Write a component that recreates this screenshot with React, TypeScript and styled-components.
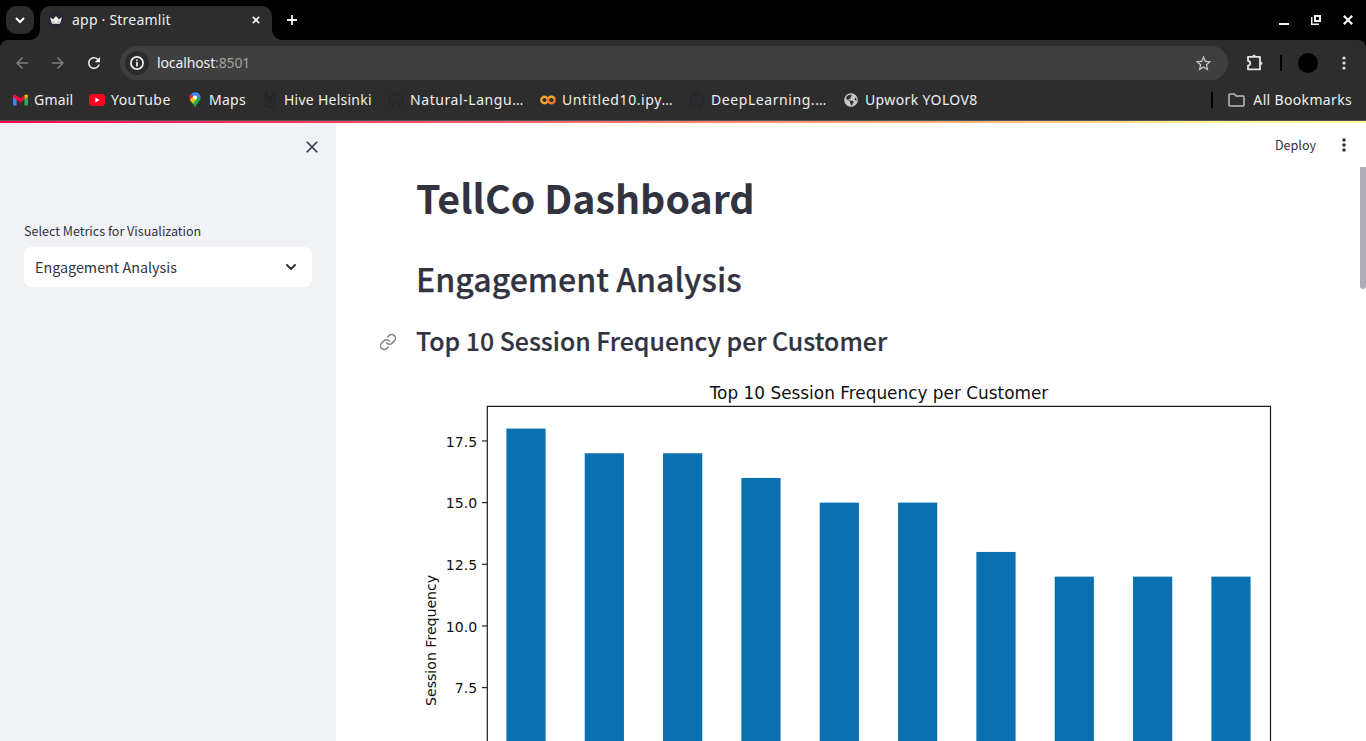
import React from "react";
import styled, { createGlobalStyle } from "styled-components";
import { FiLink } from "react-icons/fi";
import { FaGithub, FaGlobeAmericas } from "react-icons/fa";
import { MdStarBorder, MdArrowBack, MdArrowForward, MdRefresh } from "react-icons/md";

const Global = createGlobalStyle`
  html, body { margin: 0; height: 100%; overflow: hidden; }
  * { box-sizing: border-box; }
  #root { height: 100%; }
  svg { display: block; flex: none; }
`;

const sourceSans = '"Noto Sans CJK JP", "Noto Sans", sans-serif';
const uiSans = '"Noto Sans", "Open Sans", sans-serif';

const Window = styled.div`
  width: 1366px;
  height: 741px;
  display: flex;
  flex-direction: column;
  overflow: hidden;
  background: #000;
  font-family: ${uiSans};
`;

const TabStrip = styled.header`
  height: 40px;
  flex: none;
  display: flex;
  align-items: center;
  padding-right: 13px;
`;

const TabSearch = styled.button`
  width: 28px;
  height: 28px;
  margin: 0 6px;
  padding: 0;
  border: 0;
  border-radius: 10px;
  background: #2d2d2d;
  display: grid;
  place-items: center;
`;

const Tab = styled.div`
  position: relative;
  align-self: flex-end;
  width: 232px;
  height: 34px;
  border-radius: 10px 10px 0 0;
  background: #2d2d2d;
  display: flex;
  align-items: center;
  padding: 0 12px 6px 8px;
  &::before, &::after {
    content: "";
    position: absolute;
    bottom: 0;
    width: 10px;
    height: 10px;
  }
  &::before { left: -10px; background: radial-gradient(circle at 0 0, transparent 9.5px, #2d2d2d 10px); }
  &::after { right: -10px; background: radial-gradient(circle at 100% 0, transparent 9.5px, #2d2d2d 10px); }
`;

const Label = styled.span<{ $track?: number }>`
  font-size: 14px;
  letter-spacing: ${p => p.$track ?? 0}px;
  line-height: 20px;
  white-space: nowrap;
  color: #f0f0f0;
`;

const TabTitle = styled(Label)`
  margin-left: 8px;
  flex: 1;
`;

const NewTab = styled.div`
  margin-left: 14px;
  flex: 1;
`;

const WindowButtons = styled.div`
  display: flex;
  align-items: center;
  gap: 22px;
`;

const BrowserChrome = styled.div`
  height: 81px;
  flex: none;
  background: #2d2d2d;
  border-radius: 8px 8px 0 0;
  border-bottom: 1px solid #555;
`;

const Toolbar = styled.div`
  height: 40px;
  display: flex;
  align-items: flex-end;
  padding: 0 14px 0 13px;
`;

const NavButton = styled.div<{ $dim?: boolean }>`
  width: 36px;
  height: 34px;
  display: flex;
  align-items: center;
  color: ${p => (p.$dim ? "#7d7d7d" : "#ececec")};
`;

const Omnibox = styled.div`
  width: 1108px;
  height: 34px;
  margin-left: -1px;
  border-radius: 17px;
  background: #3f3f3f;
  display: flex;
  align-items: center;
  padding: 0 15px 0 5px;
`;

const SiteInfo = styled.div`
  width: 24px;
  height: 24px;
  border-radius: 50%;
  background: #2b2b2b;
  display: grid;
  place-items: center;
  margin-right: 8px;
`;

const Url = styled(Label)`
  flex: 1;
  b { font-weight: 400; color: #a5a19b; }
`;

const ToolbarEnd = styled.div`
  height: 34px;
  flex: 1;
  display: flex;
  align-items: center;
  padding-left: 18px;
`;

const Divider = styled.i`
  width: 2px;
  height: 16px;
  background: #000;
`;

const Avatar = styled.div`
  width: 20px;
  height: 20px;
  border-radius: 50%;
  background: #000;
  margin: 0 24px 0 16px;
`;

const ExtensionIcon = styled.svg`
  margin-right: 17px;
`;

const Bookmarks = styled.nav`
  height: 40px;
  display: flex;
  align-items: center;
  padding: 0 14px 0 12px;
`;

const Bookmark = styled.div<{ $width: number }>`
  width: ${p => p.$width}px;
  display: flex;
  align-items: center;
  gap: 6px;
`;

const IconSlot = styled.span`
  width: 16px;
  display: grid;
  place-items: center;
`;

const AllBookmarks = styled.div`
  margin-left: auto;
  display: flex;
  align-items: center;
  & > svg { margin: 0 8px 0 15px; }
`;

const Decoration = styled.div`
  height: 2px;
  flex: none;
  background: linear-gradient(90deg, #ff0051, #ff4b6a 30%, #ff7d6f 50%, #ffc080 75%, #fbff8f 92%, #fbff9a);
`;

const Page = styled.div`
  flex: 1;
  min-height: 0;
  display: flex;
  background: #fff;
  color: #31333f;
  font-family: ${sourceSans};
`;

const Sidebar = styled.aside`
  width: 336px;
  flex: none;
  background: #f0f2f6;
  padding: 18px 24px 0;
`;

const CloseSidebar = styled.div`
  display: flex;
  justify-content: flex-end;
  height: 80px;
  margin-right: -6px;
`;

const FieldLabel = styled.label`
  display: block;
  font-size: 12.55px;
  line-height: 20px;
  height: 26px;
`;

const Select = styled.div`
  height: 40px;
  border-radius: 8px;
  background: #fff;
  display: flex;
  align-items: center;
  justify-content: space-between;
  padding: 0 15px 0 11px;
  font-size: 14.33px;
  line-height: 20px;
`;

const Main = styled.main`
  flex: 1;
  min-width: 0;
  display: flex;
  flex-direction: column;
`;

const AppHeader = styled.div`
  height: 44px;
  flex: none;
  display: flex;
  align-items: center;
  justify-content: flex-end;
  padding-right: 20px;
  font-size: 12.55px;
  gap: 26px;
`;

const Deploy = styled.span`
  padding-bottom: 2px;
`;

const Body = styled.div`
  flex: 1;
  min-height: 0;
  display: flex;
`;

const Content = styled.div`
  flex: 1;
  padding-left: 43px;
  overflow: hidden;
`;

const Heading = styled.div<{ $size: number; $height: number; $weight: number; $stroke?: number; $top?: number }>`
  height: ${p => p.$height}px;
  margin: ${p => p.$top ?? 0}px 0 0;
  padding-left: 37px;
  font-size: ${p => p.$size}px;
  font-weight: ${p => p.$weight};
  line-height: ${p => p.$height}px;
  -webkit-text-stroke: ${p => p.$stroke ?? 0}px #31333f;
  white-space: nowrap;
`;

const AnchoredRow = styled.div`
  display: flex;
  align-items: center;
  & > svg { margin: 2px -18px 0 0; color: #85868e; }
`;

const Scrollbar = styled.div`
  width: 6px;
  height: 122px;
  background: #adadb3;
  border-radius: 0 0 3px 3px;
`;

const Close = ({ size, color, width }: { size: number; color: string; width: number }) => (
  <svg width={size} height={size} viewBox={`0 0 ${size} ${size}`} stroke={color} strokeWidth={width}>
    <path d={`M.8 .8L${size - 0.8} ${size - 0.8}M${size - 0.8} .8L.8 ${size - 0.8}`} />
  </svg>
);

const Dots = ({ color, r = 1.6, gap = 5 }: { color: string; r?: number; gap?: number }) => (
  <svg width="4" height="16" viewBox="0 0 4 16" fill={color}>
    {[-1, 0, 1].map(i => <circle key={i} cx="2" cy={8 + i * gap} r={r} />)}
  </svg>
);

const StreamlitMark = () => (
  <svg width="16" height="16" viewBox="0 0 16 16">
    <circle cx="8" cy="8" r="8" fill="#262730" />
    <path d="M2 5.3L5.2 7.2L8 4.1L10.8 7.2L14 5.3L12.2 11.2Q8 12.2 3.8 11.2Z" fill="#f2f2f2" />
    <path d="M5.2 7.2L8 11.6L10.8 7.2L12.2 11.2Q8 12.2 3.8 11.2Z" fill="#cfcfd2" />
  </svg>
);

const GmailMark = () => (
  <svg width="15" height="12" viewBox="0 0 15 12">
    <path d="M0 2.5L3.6 5V11.5H1Q0 11.5 0 10.5Z" fill="#4285f4" />
    <path d="M15 2.5L11.4 5V11.5H14Q15 11.5 15 10.5Z" fill="#34a853" />
    <path d="M11.4 1.2L13 .4Q15 .2 15 2.5L11.4 5.2Z" fill="#fbbc04" />
    <path d="M0 2.5Q0 .2 2 .4L7.5 4.2L11.4 1.2V5.7L7.5 8.8L3.6 5.7L0 3Z" fill="#f5083a" />
  </svg>
);

const YouTubeMark = () => (
  <svg width="16" height="12" viewBox="0 0 16 12">
    <rect width="16" height="12" rx="3" fill="#ff0020" />
    <path d="M6.3 3.6L10.6 6L6.3 8.4Z" fill="#fff" />
  </svg>
);

const MapsMark = () => (
  <svg width="12" height="16" viewBox="0 0 12 16">
    <path d="M6 16C5.4 13 3.8 11.6 2.4 10L9.8 1.7Q12 3.4 11.6 6.3C11.2 9.5 7 11.8 6 16Z" fill="#20ad50" />
    <path d="M.4 5.6Q.4 3.6 1.8 2L5 4.6L2.4 7.8L1.2 8.2Z" fill="#f0263c" />
    <path d="M1.8 2Q3.8 -.2 7 .2T11 3.2L7.7 6.9L4.2 4.2Z" fill="#4285f4" />
    <path d="M2.4 10Q1.3 8.8.9 7.8L4.3 4.2L7.7 6.9L3.7 11.5Z" fill="#fbbc04" />
    <circle cx="6" cy="5.6" r="2" fill="#fff" />
  </svg>
);

const HornsMark = () => (
  <svg width="12" height="16" viewBox="0 0 12 16" fill="none" stroke="#232121" strokeWidth="1" strokeLinejoin="round">
    <path d="M1 1.2L2.4 .8L3.2 5.4L5 4.8L6.5 5.2L8 5V2.2L9.8 2L11 10.5Q10.8 14.8 6.8 15T1.8 11ZM5 5.2V8.4M7.2 5.2V8.2M2.6 9.6L8 8.8L8.4 10.4L5 11.8" />
  </svg>
);

const ColabMark = () => (
  <svg width="16" height="10" viewBox="0 0 16 10" fill="none" strokeWidth="2.4">
    <circle cx="4.5" cy="5" r="3.2" stroke="#f9a42c" />
    <circle cx="11.4" cy="5" r="3.3" stroke="#ef7328" />
    <path d="M8.7 3A3.3 3.3 0 0 1 14.4 3.6" stroke="#f9a42c" />
  </svg>
);

const bookmarks = [
  { text: "Gmail", icon: <GmailMark />, width: 77, track: 0.2 },
  { text: "YouTube", icon: <YouTubeMark />, width: 98, track: 0.45 },
  { text: "Maps", icon: <MapsMark />, width: 75, track: 0.25 },
  { text: "Hive Helsinki", icon: <HornsMark />, width: 126, track: 0.25 },
  { text: "Natural-Langu…", icon: <FaGithub size={16} color="#25292f" />, width: 152, track: 0.57 },
  { text: "Untitled10.ipy…", icon: <ColabMark />, width: 149, track: 0.6 },
  { text: "DeepLearning.…", icon: <FaGithub size={16} color="#25292f" />, width: 154, track: 0.57 },
  { text: "Upwork YOLOV8", icon: <FaGlobeAmericas size={14} color="#c4c7cb" />, width: 140, track: 0.38 },
];

const frequencies = [18, 17, 17, 16, 15, 15, 13, 12, 12, 12];
const ticks = [17.5, 15, 12.5, 10, 7.5];
const UNIT = 24.67;
const yOf = (v: number) => 58.6 + (18 - v) * UNIT;

const FrequencyChart = () => (
  <svg width="870" height="372" viewBox="0 0 870 372" fontFamily='"DejaVu Sans", sans-serif' fill="#111">
    {frequencies.map((v, i) => (
      <rect key={i} x={90.4 + i * 78.33} y={yOf(v)} width={39.2} height={400} fill="#0a70b0" />
    ))}
    <path d="M71.3 400V36.4H854.5V400" fill="none" stroke="#1c1c1c" strokeWidth="1.2" />
    {ticks.map(t => (
      <g key={t}>
        <path d={`M66 ${yOf(t)}H71`} stroke="#222" strokeWidth="1.2" />
        <text x="61.2" y={yOf(t) + 5.7} textAnchor="end" fontSize="14.1">{t.toFixed(1)}</text>
      </g>
    ))}
    <text x="463" y="28.6" textAnchor="middle" fontSize="16.9">Top 10 Session Frequency per Customer</text>
    <text transform="translate(20.1 270.4) rotate(-90)" textAnchor="middle" fontSize="14.1">Session Frequency</text>
  </svg>
);

const ChartBox = styled.div`
  margin: 4px 0 0 37px;
`;

export default function App() {
  return (
    <Window>
      <Global />
      <TabStrip>
        <TabSearch>
          <svg width="10" height="7" viewBox="0 0 10 7" fill="none" stroke="#fff" strokeWidth="2"><path d="M1 1L5 5L9 1" /></svg>
        </TabSearch>
        <Tab>
          <StreamlitMark />
          <TabTitle $track={0.22}>app · Streamlit</TabTitle>
          <Close size={8} color="#f2f2f2" width={1.7} />
        </Tab>
        <NewTab>
          <svg width="12" height="12" viewBox="0 0 12 12" stroke="#f2f2f2" strokeWidth="1.8"><path d="M6 1V11M1 6H11" /></svg>
        </NewTab>
        <WindowButtons>
          <svg width="10" height="10" viewBox="0 0 10 10" fill="#f4f4f8"><path d="M0 8H10V10H0Z" /></svg>
          <svg width="10" height="10" viewBox="0 0 10 10" fill="none" stroke="#f4f4f8"><path d="M4 1H9V6H4Z" strokeWidth="2" /><path d="M.75 2V9.2H8" strokeWidth="1.5" /></svg>
          <Close size={10} color="#f4f4f8" width={2.2} />
        </WindowButtons>
      </TabStrip>
      <BrowserChrome>
        <Toolbar>
          <NavButton $dim><MdArrowBack size={18} /></NavButton>
          <NavButton $dim><MdArrowForward size={18} /></NavButton>
          <NavButton><MdRefresh size={18} /></NavButton>
          <Omnibox>
            <SiteInfo>
              <svg width="14" height="14" viewBox="0 0 14 14" fill="none" stroke="#f4f4f4" strokeWidth="1.7">
                <circle cx="7" cy="7" r="6.1" /><path d="M7 6V10.4M7 3.5V5.1" />
              </svg>
            </SiteInfo>
            <Url $track={-0.12}>localhost<b>:8501</b></Url>
            <MdStarBorder size={19} color="#c6c6c6" />
          </Omnibox>
          <ToolbarEnd>
            <ExtensionIcon width="17" height="18" viewBox="0 0 17 18" fill="none" stroke="#e6e6e6" strokeWidth="1.8" strokeLinejoin="round">
              <path d="M2 2.9H14V15.4H2V11.6Q4.2 11.3 4.2 9.2T2 6.9Z" />
              <path d="M6.6 2.4Q6.8 1 8 1T9.4 2.4ZM14.6 7.7Q16 7.9 16 9.2T14.6 10.7Z" fill="#e6e6e6" strokeWidth=".8" />
            </ExtensionIcon>
            <Divider />
            <Avatar />
            <Dots color="#dedede" />
          </ToolbarEnd>
        </Toolbar>
        <Bookmarks>
          {bookmarks.map(b => (
            <Bookmark key={b.text} $width={b.width}>
              <IconSlot>{b.icon}</IconSlot>
              <Label $track={b.track}>{b.text}</Label>
            </Bookmark>
          ))}
          <AllBookmarks>
            <Divider />
            <svg width="17" height="14" viewBox="0 0 17 14" fill="none" stroke="#bdbdbd" strokeWidth="1.5" strokeLinejoin="round">
              <path d="M1 2Q1 1 2 1H6.3L8.2 3H15Q16 3 16 4V12Q16 13 15 13H2Q1 13 1 12Z" />
            </svg>
            <Label $track={0.34}>All Bookmarks</Label>
          </AllBookmarks>
        </Bookmarks>
      </BrowserChrome>
      <Decoration />
      <Page>
        <Sidebar>
          <CloseSidebar><Close size={12} color="#31333f" width={1.6} /></CloseSidebar>
          <FieldLabel>Select Metrics for Visualization</FieldLabel>
          <Select>
            <span>Engagement Analysis</span>
            <svg width="12" height="8" viewBox="0 0 12 8" fill="none" stroke="#31333f" strokeWidth="2" strokeLinecap="round" strokeLinejoin="round"><path d="M2 2L6 6L10 2" /></svg>
          </Select>
        </Sidebar>
        <Main>
          <AppHeader>
            <Deploy>Deploy</Deploy>
            <Dots color="#31333f" r={1.8} />
          </AppHeader>
          <Body>
            <Content>
              <Heading as="h1" $size={39.3} $height={60} $weight={700}>TellCo Dashboard</Heading>
              <Heading as="h2" $size={32.1} $height={73} $weight={500} $stroke={0.25} $top={15}>Engagement Analysis</Heading>
              <AnchoredRow>
                <FiLink size={18} strokeWidth={2} />
                <Heading as="h3" $size={24.87} $height={51} $weight={500} $stroke={0.2}>Top 10 Session Frequency per Customer</Heading>
              </AnchoredRow>
              <ChartBox><FrequencyChart /></ChartBox>
            </Content>
            <Scrollbar />
          </Body>
        </Main>
      </Page>
    </Window>
  );
}
